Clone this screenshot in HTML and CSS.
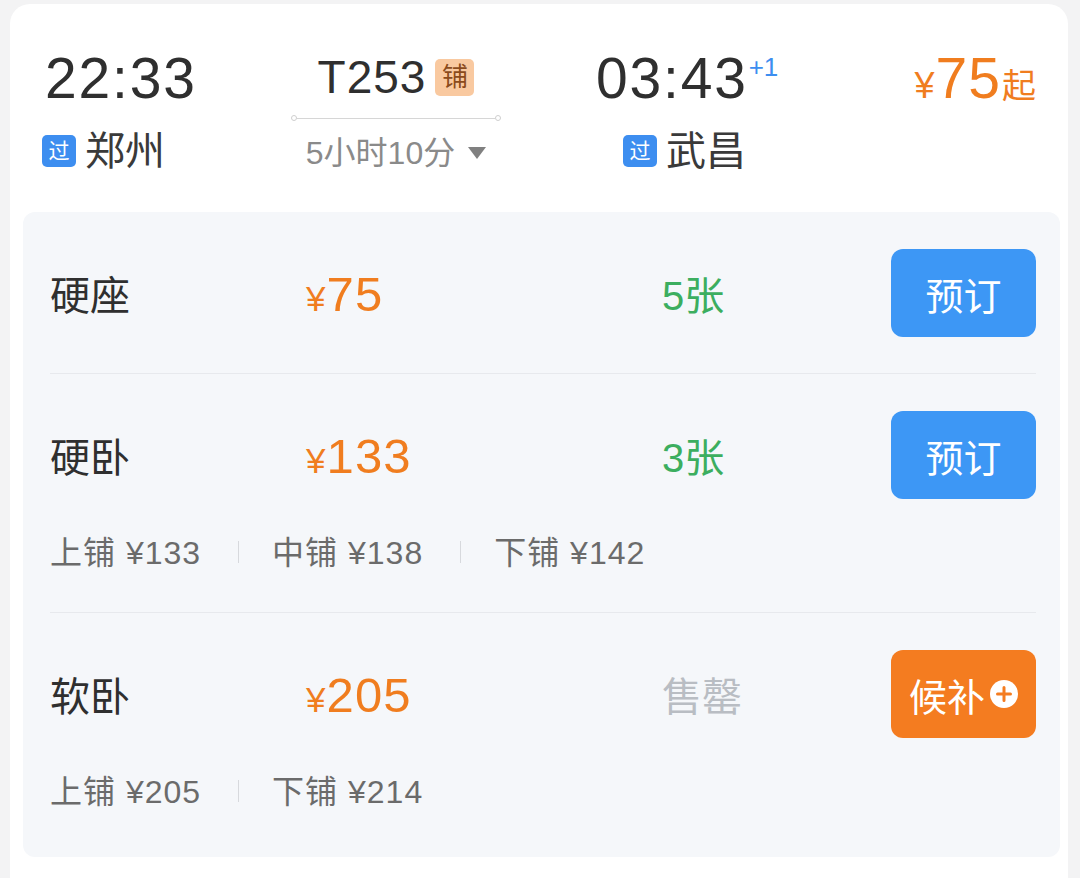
FILE: index.html
```html
<!DOCTYPE html>
<html lang="zh-CN">
<head>
<meta charset="utf-8">
<title>T253</title>
<link rel="stylesheet" href="styles.css">
</head>
<body>
<div class="card">
  <div class="header">
    <div class="dep">
      <div class="time">22:33</div>
      <div class="station"><span class="tag">过</span><span class="sname">郑州</span></div>
    </div>
    <div class="mid">
      <div class="train"><span class="tno">T253</span><span class="pu">铺</span></div>
      <div class="line"><span class="dot"></span><span class="bar"></span><span class="dot"></span></div>
      <div class="dur">5小时10分<span class="tri"></span></div>
    </div>
    <div class="arr">
      <div class="time">03:43<span class="plus">+1</span></div>
      <div class="station arr-st"><span class="tag">过</span><span class="sname">武昌</span></div>
    </div>
    <div class="from">
      <span class="yen">¥</span><span class="fnum">75</span><span class="qi">起</span>
    </div>
  </div>

  <div class="panel">
    <div class="seat">
      <div class="main">
        <div class="sname-seat">硬座</div>
        <div class="price"><span class="py">¥</span>75</div>
        <div class="stock">5张</div>
        <div class="btn blue">预订</div>
      </div>
    </div>
    <div class="seat has-sub">
      <div class="main">
        <div class="sname-seat">硬卧</div>
        <div class="price"><span class="py">¥</span>133</div>
        <div class="stock">3张</div>
        <div class="btn blue">预订</div>
      </div>
      <div class="sub">
        <span class="berth">上铺 ¥133</span><span class="sep"></span>
        <span class="berth">中铺 ¥138</span><span class="sep"></span>
        <span class="berth">下铺 ¥142</span>
      </div>
    </div>
    <div class="seat has-sub last">
      <div class="main">
        <div class="sname-seat">软卧</div>
        <div class="price"><span class="py">¥</span>205</div>
        <div class="stock soldout">售罄</div>
        <div class="btn orange">候补<svg class="plusicon" viewBox="0 0 28 28" width="28" height="28"><circle cx="14" cy="14" r="14" fill="#fff"/><path d="M14 7.5v13M7.5 14h13" stroke="#f47c20" stroke-width="3" stroke-linecap="round"/></svg></div>
      </div>
      <div class="sub">
        <span class="berth">上铺 ¥205</span><span class="sep"></span>
        <span class="berth">下铺 ¥214</span>
      </div>
    </div>
  </div>
</div>
</body>
</html>
```

FILE: styles.css
```css
* { box-sizing: border-box; }
html, body { margin: 0; padding: 0; }
body {
  background: #f3f3f4;
  font-family: "Liberation Sans", "Noto Sans CJK SC", sans-serif;
  color: #333;
  height: 878px;
  overflow: hidden;
}
.card {
  margin: 4px 12px 0 10px;
  background: #fff;
  border-radius: 20px 20px 0 0;
  padding: 46px 8px 40px 13px;
  min-height: 900px;
}
.header {
  display: flex;
  align-items: flex-start;
  padding-left: 19px;
  padding-right: 24px;
  height: 162px;
}
.dep { width: 249px; }
.time {
  font-size: 57px;
  line-height: 56px;
  color: #2f2f2f;
  letter-spacing: 1.8px;
  position: relative;
  display: inline-block;
}
.dep .time { padding-left: 3px; }
.plus {
  position: absolute;
  left: 100%;
  top: 4px;
  margin-left: 1px;
  font-size: 26px;
  line-height: 26px;
  letter-spacing: 0;
  color: #3d8ef0;
}
.station {
  display: flex;
  align-items: center;
  height: 40px;
  margin-top: 25px;
}
.tag {
  width: 34px;
  height: 32px;
  border-radius: 5px;
  background: #3d8ef0;
  color: #fff;
  font-size: 21px;
  line-height: 32px;
  text-align: center;
  margin-right: 9px;
}
.sname {
  font-size: 40px;
  line-height: 40px;
  color: #3a3a3a;
}
.mid {
  width: 210px;
  display: flex;
  flex-direction: column;
  align-items: center;
  padding-top: 4px;
}
.train {
  display: flex;
  align-items: center;
  height: 46px;
}
.tno {
  font-size: 46px;
  line-height: 46px;
  letter-spacing: 1px;
  color: #2f2f2f;
}
.pu {
  margin-left: 9px;
  width: 39px;
  height: 37px;
  border-radius: 5px;
  background: #f9c9a0;
  color: #8b4b1c;
  font-size: 26px;
  line-height: 37px;
  text-align: center;
}
.line {
  width: 210px;
  display: flex;
  align-items: center;
  margin-top: 15px;
}
.line .bar {
  flex: 1;
  height: 1px;
  background: #d6d6d6;
}
.line .dot {
  width: 6px;
  height: 6px;
  border-radius: 50%;
  border: 1px solid #cfcfcf;
  background: #fff;
}
.dur {
  display: flex;
  align-items: center;
  margin-top: 12px;
  font-size: 32px;
  line-height: 40px;
  color: #8a8a8a;
}
.tri {
  margin-left: 13px;
  width: 0;
  height: 0;
  border-left: 9.5px solid transparent;
  border-right: 9.5px solid transparent;
  border-top: 12px solid #808080;
}
.arr {
  margin-left: 95px;
  width: 186px;
}
.arr-st { padding-left: 27px; }
.from {
  margin-left: auto;
  color: #f07d1f;
  display: flex;
  align-items: baseline;
  line-height: 56px;
}
.from .yen { font-size: 36px; margin-right: 1px; }
.from .fnum { font-size: 57px; letter-spacing: 1px; }
.from .qi { font-size: 34px; margin-left: 1px; }

.panel {
  background: #f5f7fa;
  border-radius: 12px;
  padding: 0 24px 0 27px;
  width: 1037px;
}
.seat {
  padding: 37px 0 36px;
  border-bottom: 1px solid #e7e9ed;
}
.seat.has-sub { padding-bottom: 42px; }
.seat.last { border-bottom: none; padding-bottom: 48px; }
.main {
  display: grid;
  grid-template-columns: 256px 356px 1fr 145px;
  align-items: center;
  height: 88px;
}
.sname-seat {
  font-size: 40px;
  color: #2f2f2f;
}
.price {
  color: #f07d1f;
  font-size: 49px;
  line-height: 50px;
  letter-spacing: 1.2px;
  padding-top: 6px;
}
.price .py { font-size: 35px; margin-right: 1px; letter-spacing: 0; }
.stock {
  font-size: 40px;
  color: #3cae5f;
}
.stock.soldout { color: #b9bdc3; }
.btn {
  height: 88px;
  border-radius: 12px;
  color: #fff;
  font-size: 38px;
  display: flex;
  align-items: center;
  justify-content: center;
}
.btn.blue { background: #3d97f5; }
.btn.orange { background: #f47c20; }
.plusicon { margin-left: 5px; }
.sub {
  margin-top: 31px;
  height: 40px;
  display: flex;
  align-items: center;
  font-size: 32px;
  letter-spacing: 1px;
  color: #6b6b6b;
}
.sep {
  width: 1px;
  height: 22px;
  background: #d7d9dd;
  margin: 4px 33px 0 37px;
}
```
